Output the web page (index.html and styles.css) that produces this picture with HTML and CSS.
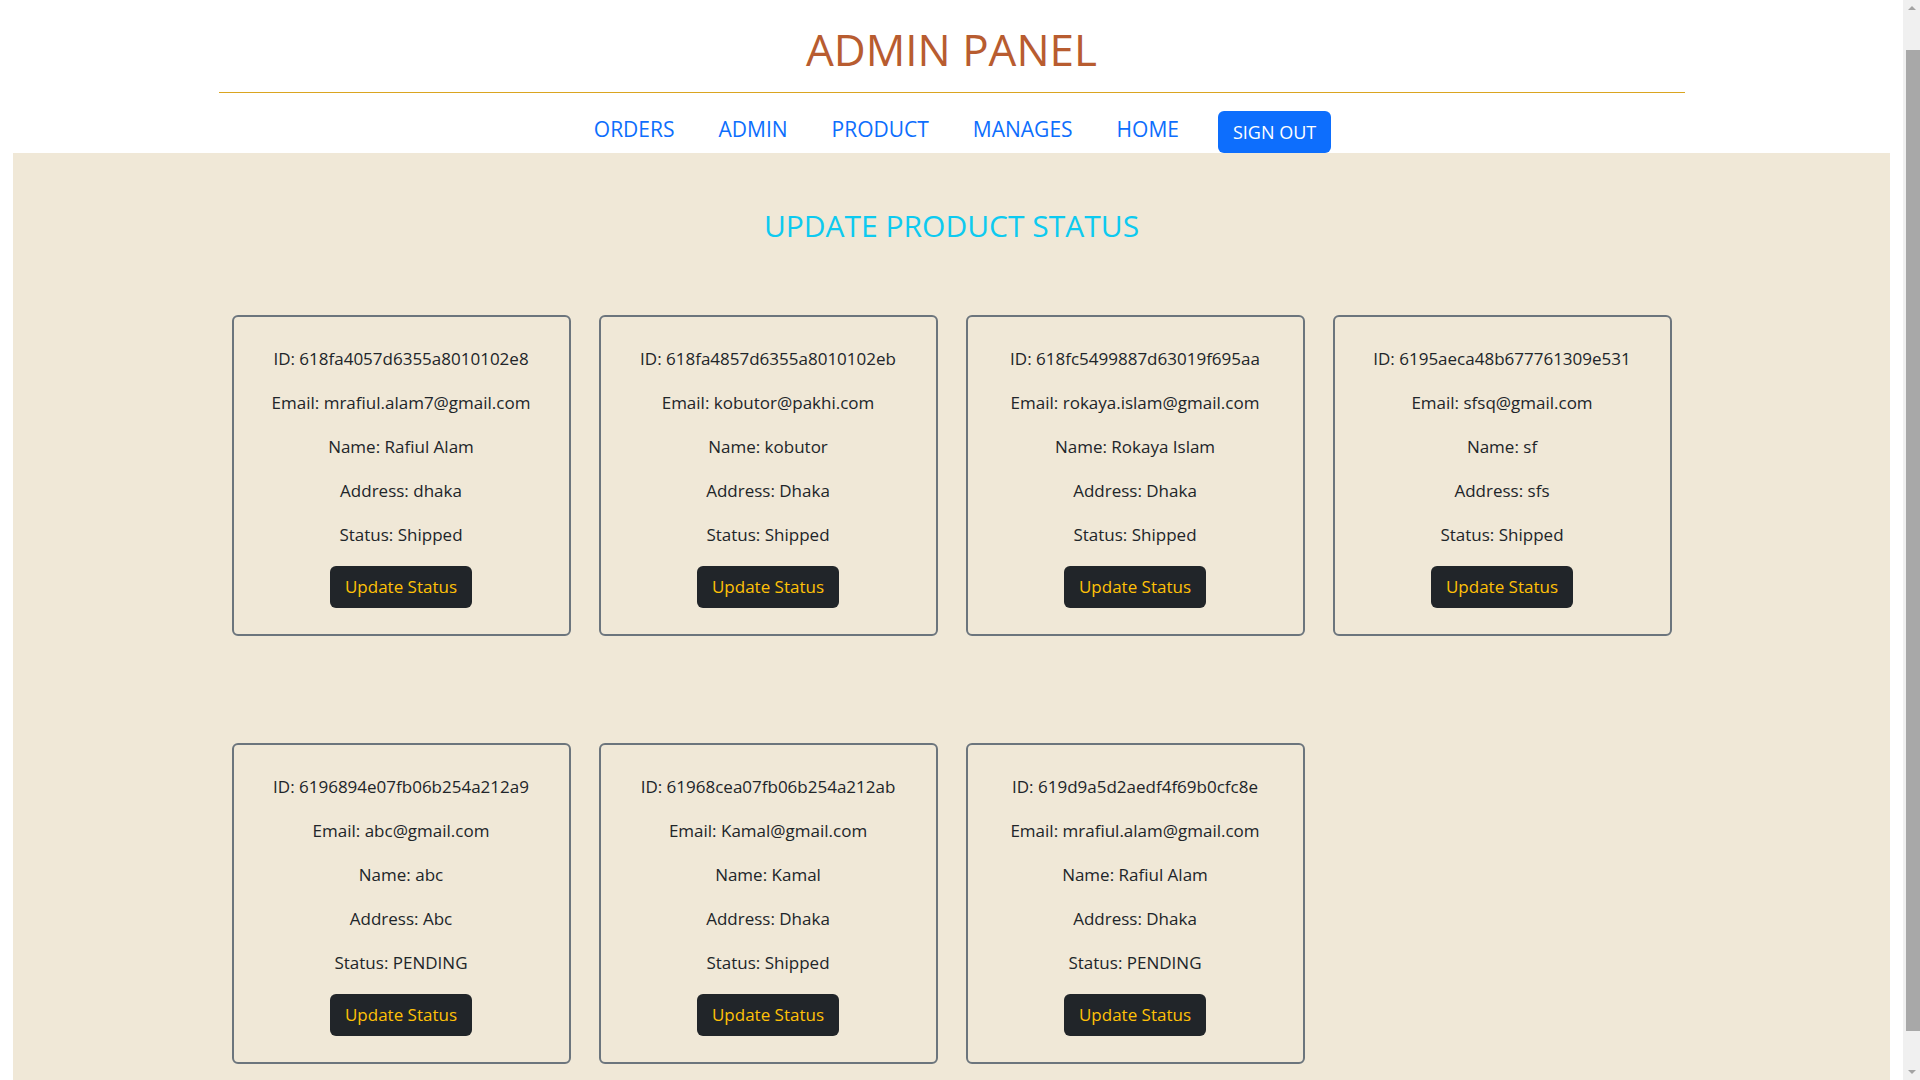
FILE: index.html
```html
<!DOCTYPE html>
<html lang="en">
<head>
<meta charset="utf-8">
<title>Admin Panel</title>
<link rel="stylesheet" href="styles.css">
</head>
<body>
<header class="site-header">
  <h1 class="brand">ADMIN PANEL</h1>
  <hr class="divider">
  <nav class="nav">
    <a class="nav-link" href="#">ORDERS</a>
    <a class="nav-link" href="#">ADMIN</a>
    <a class="nav-link" href="#">PRODUCT</a>
    <a class="nav-link" href="#">MANAGES</a>
    <a class="nav-link" href="#">HOME</a>
    <button class="btn-signout" type="button">SIGN OUT</button>
  </nav>
</header>
<main class="panel">
  <h2 class="panel-title">UPDATE PRODUCT STATUS</h2>
  <div class="card-grid">
    <div class="order-card">
      <p>ID: 618fa4057d6355a8010102e8</p>
      <p>Email: mrafiul.alam7@gmail.com</p>
      <p>Name: Rafiul Alam</p>
      <p>Address: dhaka</p>
      <p>Status: Shipped</p>
      <button class="btn-update" type="button">Update Status</button>
    </div>
    <div class="order-card">
      <p>ID: 618fa4857d6355a8010102eb</p>
      <p>Email: kobutor@pakhi.com</p>
      <p>Name: kobutor</p>
      <p>Address: Dhaka</p>
      <p>Status: Shipped</p>
      <button class="btn-update" type="button">Update Status</button>
    </div>
    <div class="order-card">
      <p>ID: 618fc5499887d63019f695aa</p>
      <p>Email: rokaya.islam@gmail.com</p>
      <p>Name: Rokaya Islam</p>
      <p>Address: Dhaka</p>
      <p>Status: Shipped</p>
      <button class="btn-update" type="button">Update Status</button>
    </div>
    <div class="order-card">
      <p>ID: 6195aeca48b677761309e531</p>
      <p>Email: sfsq@gmail.com</p>
      <p>Name: sf</p>
      <p>Address: sfs</p>
      <p>Status: Shipped</p>
      <button class="btn-update" type="button">Update Status</button>
    </div>
    <div class="order-card">
      <p>ID: 6196894e07fb06b254a212a9</p>
      <p>Email: abc@gmail.com</p>
      <p>Name: abc</p>
      <p>Address: Abc</p>
      <p>Status: PENDING</p>
      <button class="btn-update" type="button">Update Status</button>
    </div>
    <div class="order-card">
      <p>ID: 61968cea07fb06b254a212ab</p>
      <p>Email: Kamal@gmail.com</p>
      <p>Name: Kamal</p>
      <p>Address: Dhaka</p>
      <p>Status: Shipped</p>
      <button class="btn-update" type="button">Update Status</button>
    </div>
    <div class="order-card">
      <p>ID: 619d9a5d2aedf4f69b0cfc8e</p>
      <p>Email: mrafiul.alam@gmail.com</p>
      <p>Name: Rafiul Alam</p>
      <p>Address: Dhaka</p>
      <p>Status: PENDING</p>
      <button class="btn-update" type="button">Update Status</button>
    </div>
  </div>
</main>
<div class="scrollbar" aria-hidden="true">
  <span class="scroll-arrow scroll-up"></span>
  <span class="scroll-thumb"></span>
  <span class="scroll-arrow scroll-down"></span>
</div>
</body>
</html>
```

FILE: styles.css
```css
* {
  box-sizing: border-box;
}

html, body {
  margin: 0;
  padding: 0;
}

body {
  font-family: "Open Sans", "Noto Sans", "Liberation Sans", sans-serif;
  color: #212529;
  background: #ffffff;
  padding-right: 17px;
}

.site-header {
  display: flex;
  flex-direction: column;
  align-items: center;
  padding-top: 23px;
}

.brand {
  margin: 0;
  font-size: 44px;
  line-height: 52px;
  font-weight: 400;
  color: #b85c30;
}

.divider {
  width: 1466px;
  margin: 17px 0 0 0;
  border: 0;
  border-top: 1px solid #daa520;
  height: 0;
}

.nav {
  display: flex;
  align-items: flex-start;
  justify-content: center;
  gap: 44px;
  padding: 18px 0 0 22px;
}

.nav-link {
  display: block;
  padding-top: 3px;
  font-size: 21px;
  line-height: 30px;
  color: #0d6efd;
  text-decoration: none;
}

.btn-signout {
  margin-left: -5px;
  font-family: inherit;
  font-size: 18px;
  line-height: 26px;
  padding: 8px 15px;
  height: 42px;
  border: 0;
  border-radius: 6px;
  background: #0d6efd;
  color: #ffffff;
}

.panel {
  margin: 0 13px;
  background: #f0e8d7;
  padding: 55px 0 87px;
}

.panel-title {
  margin: 0;
  text-align: center;
  font-size: 30px;
  line-height: 36px;
  font-weight: 400;
  color: #0dcaf0;
}

.card-grid {
  display: grid;
  grid-template-columns: repeat(4, 339px);
  column-gap: 28px;
  row-gap: 107px;
  justify-content: center;
  margin-top: 71px;
}

.order-card {
  display: flex;
  flex-direction: column;
  align-items: center;
  height: 321px;
  padding: 28px 8px 26px;
  border: 2px solid #6c757d;
  border-radius: 6px;
  text-align: center;
}

.order-card p {
  margin: 0 0 16px;
  font-size: 17px;
  line-height: 28px;
  white-space: nowrap;
}

.order-card p:last-of-type {
  margin-bottom: 17px;
}

.btn-update {
  font-family: inherit;
  font-size: 17px;
  line-height: 26px;
  height: 42px;
  padding: 8px 15px;
  border: 0;
  border-radius: 6px;
  background: #212529;
  color: #ffc107;
}

.scrollbar {
  position: fixed;
  top: 0;
  right: 0;
  width: 17px;
  height: 100vh;
  background: #f0f0f0;
  display: flex;
  flex-direction: column;
  align-items: center;
  justify-content: space-between;
}

.scroll-arrow {
  width: 0;
  height: 0;
  border-left: 4px solid transparent;
  border-right: 4px solid transparent;
  margin: 6px 0;
}

.scroll-up {
  border-bottom: 4px solid #a3a3a3;
}

.scroll-down {
  border-top: 4px solid #a3a3a3;
}

.scroll-thumb {
  width: 14px;
  height: 981px;
  margin-left: 3px;
  background: #a8a8a8;
}
```
